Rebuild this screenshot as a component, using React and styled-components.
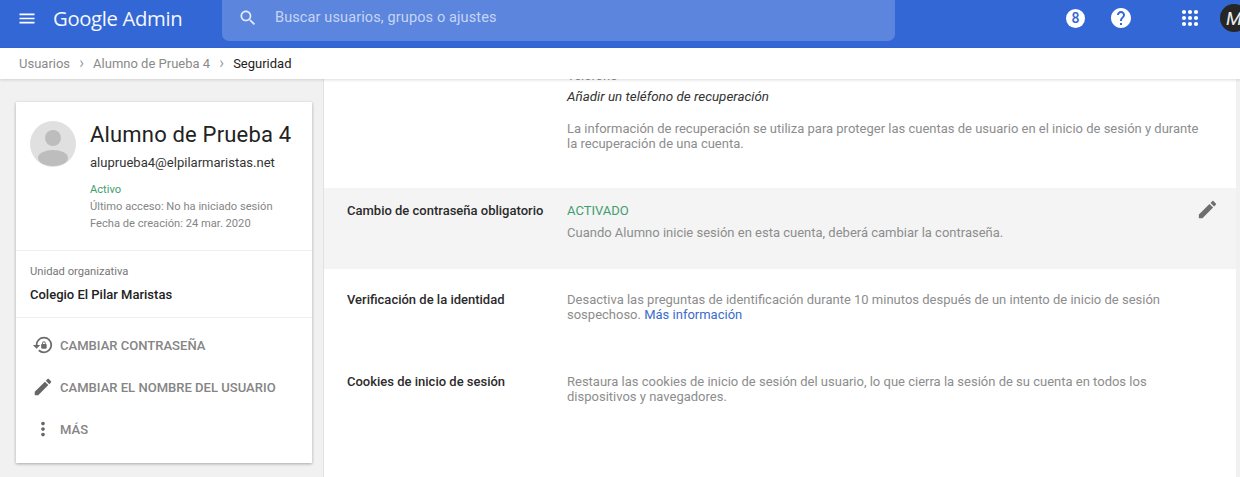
import React from 'react';
import styled, { createGlobalStyle } from 'styled-components';

const Global = createGlobalStyle`
  html, body { margin: 0; padding: 0; height: 100%; overflow: hidden; }
  body { font-family: Roboto, "Liberation Sans", sans-serif; background: #f1f1f1; }
  * { box-sizing: border-box; }
`;
const Page = styled.div`width: 1240px; height: 477px; display: flex; flex-direction: column; overflow: hidden;`;
const TopBar = styled.header`height: 48px; flex: none; background: #3367d6; display: flex; align-items: flex-start; color: #fff; overflow: hidden; padding-left: 17px;`;
const MenuBtn = styled.div`width: 20px; flex: none; height: 36px; display: flex; align-items: center; justify-content: center; margin-right: 16px;`;
const Logo = styled.div`width: 169px; flex: none; height: 36px; line-height: 36px; font-family: "Open Sans", sans-serif; font-size: 20.3px; letter-spacing: -0.35px; opacity: .95;`;
const Search = styled.div`width: 673px; flex: none; height: 41px; background: #5c85de; border-radius: 0 0 7px 7px; display: flex; align-items: flex-start; padding-left: 16px; margin-right: 171px;`;
const SearchIconBox = styled.div`height: 36px; display: flex; align-items: center; margin-right: 17px;`;
const SearchText = styled.div`height: 36px; line-height: 36px; font-size: 14.5px; letter-spacing: .12px; color: #c6d5f4;`;
const HeadIcons = styled.div`height: 36px; flex: none; display: flex; align-items: center;`;
const Badge = styled.div`width: 19px; height: 19px; flex: none; border-radius: 50%; background: #fff; color: #3367d6; font-size: 14px; font-weight: 500; display: flex; align-items: center; justify-content: center; margin-right: 24px;`;
const HelpBox = styled.div`width: 24px; height: 24px; flex: none; margin-right: 45px;`;
const AppsBox = styled.div`width: 24px; height: 24px; flex: none; margin-right: 18px;`;
const Avatar = styled.div`width: 28px; height: 28px; flex: none; border-radius: 50%; background: #262626; color: #eee; font-size: 19px; font-style: italic; font-weight: 400; display: flex; align-items: center; justify-content: flex-start; padding-left: 6px; overflow: hidden;`;
const Crumbs = styled.nav`height: 31px; flex: none; background: #fff; display: flex; align-items: center; padding: 0 0 1px 19px; font-size: 13px; color: #8a8a8a; box-shadow: 0 1px 3px rgba(0,0,0,.14); position: relative; z-index: 2;`;
const Sep = styled.span`width: 23px; text-align: center; font-size: 16px; line-height: 16px; color: #9a9a9a;`;
const Current = styled.span`color: #222;`;
const Main = styled.main`flex: 1; min-height: 0; display: flex;`;
const Side = styled.aside`width: 324px; flex: none; padding: 23px 11px 0 16px; border-right: 1px solid #e2e2e2;`;
const Card = styled.section`background: #fff; height: 361px; box-shadow: 0 1px 3px rgba(0,0,0,.3);`;
const UserHead = styled.div`height: 149px; padding: 19px 0 0 14px; display: flex; border-bottom: 1px solid #f0f0f0;`;
const Photo = styled.div`width: 46px; height: 46px; flex: none; border-radius: 50%; overflow: hidden; margin-right: 14px;`;
const UserInfo = styled.div`min-width: 0;`;
const Name = styled.h1`margin: 0; font-size: 22px; font-weight: 400; line-height: 28px; color: #222; white-space: nowrap; letter-spacing: .18px;`;
const Email = styled.div`font-size: 13.05px; line-height: 18px; margin-top: 5px; color: #333; white-space: nowrap;`;
const Meta = styled.div`font-size: 11.15px; line-height: 17px; color: ${p => p.$green ? '#3f9e70' : '#858585'}; white-space: nowrap; margin-top: ${p => p.$green ? '9px' : '0'};`;
const OrgBlock = styled.div`height: 67px; padding: 14px 0 0 14px; border-bottom: 1px solid #f0f0f0;`;
const OrgLabel = styled.div`font-size: 11.2px; line-height: 14px; color: #777;`;
const OrgName = styled.div`font-size: 13px; line-height: 16px; margin-top: 8px; font-weight: 500; color: #222;`;
const Actions = styled.div`padding-top: 6px;`;
const Action = styled.div`height: 42px; display: flex; align-items: center; padding-left: 15px; font-size: 13.05px; font-weight: 500; color: #858585; white-space: nowrap;`;
const ActionIcon = styled.span`width: 24px; height: 22px; margin-right: 5px; display: flex; align-items: center; justify-content: center;`;
const Content = styled.div`flex: 1; margin-right: 4px; background: #fff; overflow: hidden; font-size: 13px; line-height: 15px; color: #858585;`;
const Scroller = styled.div`margin-top: -11px;`;
const Row = styled.div`display: grid; grid-template-columns: 220px 637px; padding: ${p => p.$pad || '0'} 0 0 23px; height: ${p => p.$h}px; background: ${p => p.$on ? '#f4f4f4' : 'transparent'}; position: relative;`;
const Label = styled.div`font-weight: 500; color: #2b2b2b; white-space: nowrap;`;
const Body = styled.div`min-width: 0;`;
const Muted = styled.div`color: #8d8d8d;`;
const Italic = styled.div`font-style: italic; font-size: 13.4px; color: #333; margin-top: 6px; margin-bottom: 17px;`;
const Status = styled.div`color: #3f9e70; margin-bottom: 7px;`;
const Link = styled.a`color: #3b6cc9; text-decoration: none;`;
const EditCell = styled.div`position: absolute; top: 10px; right: 17px; width: 23px; height: 23px;`;

const P = { m: 'M3 18h18v-2H3v2zm0-5h18v-2H3v2zm0-7v2h18V6H3z',
  s: 'M15.5 14h-.79l-.28-.27C15.41 12.59 16 11.11 16 9.5 16 5.91 13.09 3 9.5 3S3 5.91 3 9.5 5.91 16 9.5 16c1.61 0 3.09-.59 4.23-1.57l.27.28v.79l5 4.99L20.49 19l-4.99-5zm-6 0C7.01 14 5 11.99 5 9.5S7.01 5 9.5 5 14 7.01 14 9.5 11.99 14 9.5 14z',
  h: 'M12 2C6.48 2 2 6.48 2 12s4.48 10 10 10 10-4.48 10-10S17.52 2 12 2zm1 17h-2v-2h2v2zm2.07-7.75l-.9.92C13.45 12.9 13 13.5 13 15h-2v-.5c0-1.1.45-2.1 1.17-2.83l1.24-1.26c.37-.36.59-.86.59-1.41 0-1.1-.9-2-2-2s-2 .9-2 2H8c0-2.21 1.79-4 4-4s4 1.79 4 4c0 .88-.36 1.68-.93 2.25z',
  e: 'M3 17.25V21h3.75L17.81 9.94l-3.75-3.75L3 17.25zM20.71 7.04c.39-.39.39-1.02 0-1.41l-2.34-2.34c-.39-.39-1.02-.39-1.41 0l-1.83 1.83 3.75 3.75 1.83-1.83z',
  v: 'M12 8c1.1 0 2-.9 2-2s-.9-2-2-2-2 .9-2 2 .9 2 2 2zm0 2c-1.1 0-2 .9-2 2s.9 2 2 2 2-.9 2-2-.9-2-2-2zm0 6c-1.1 0-2 .9-2 2s.9 2 2 2 2-.9 2-2-.9-2-2-2z',
  l: 'M13 3a9 9 0 0 0-9 9H1l4 4 4-4H6c0-3.87 3.13-7 7-7s7 3.13 7 7-3.13 7-7 7c-1.9 0-3.6-.77-4.85-2l-1.42 1.42A8.95 8.95 0 0 0 13 21a9 9 0 0 0 0-18zm2 8v-1a2 2 0 1 0-4 0v1c-.55 0-1 .45-1 1v3c0 .55.45 1 1 1h4c.55 0 1-.45 1-1v-3c0-.55-.45-1-1-1zm-1 0h-2v-1a1 1 0 1 1 2 0v1z' };
const Icon = ({ d, size = 24, color = '#fff' }) => (
  <svg width={size} height={size} viewBox="0 0 24 24" fill={color} fillRule="evenodd"><path d={d} /></svg>
);

export default function App() {
  return (
    <Page>
      <Global />
      <TopBar>
        <MenuBtn><Icon d={P.m} size={23} /></MenuBtn>
        <Logo>Google Admin</Logo>
        <Search>
          <SearchIconBox><Icon d={P.s} size={20} color="#e4ebfa" /></SearchIconBox>
          <SearchText>Buscar usuarios, grupos o ajustes</SearchText>
        </Search>
        <HeadIcons>
          <Badge>8</Badge>
          <HelpBox><Icon d={P.h} /></HelpBox>
          <AppsBox>
            <svg width="24" height="24" viewBox="0 0 24 24" fill="#fff">
              {[6, 12, 18].flatMap(y => [6, 12, 18].map(x => <circle key={`${x}-${y}`} cx={x} cy={y} r="2.1" />))}
            </svg>
          </AppsBox>
          <Avatar>M</Avatar>
        </HeadIcons>
      </TopBar>
      <Crumbs>
        Usuarios<Sep>›</Sep>Alumno de Prueba 4<Sep>›</Sep><Current>Seguridad</Current>
      </Crumbs>
      <Main>
        <Side>
          <Card>
            <UserHead>
              <Photo>
                <svg width="46" height="46" viewBox="0 0 46 46">
                  <rect width="46" height="46" fill="#e0e0e0" />
                  <circle cx="23" cy="17" r="8" fill="#bdbdbd" />
                  <ellipse cx="23" cy="37" rx="15" ry="8" fill="#bdbdbd" />
                </svg>
              </Photo>
              <UserInfo>
                <Name>Alumno de Prueba 4</Name>
                <Email>aluprueba4@elpilarmaristas.net</Email>
                <Meta $green>Activo</Meta>
                <Meta>Último acceso: No ha iniciado sesión</Meta>
                <Meta>Fecha de creación: 24 mar. 2020</Meta>
              </UserInfo>
            </UserHead>
            <OrgBlock>
              <OrgLabel>Unidad organizativa</OrgLabel>
              <OrgName>Colegio El Pilar Maristas</OrgName>
            </OrgBlock>
            <Actions>
              <Action><ActionIcon><Icon d={P.l} size={22} color="#6b6b6b" /></ActionIcon>CAMBIAR CONTRASEÑA</Action>
              <Action><ActionIcon><Icon d={P.e} size={22} color="#666" /></ActionIcon>CAMBIAR EL NOMBRE DEL USUARIO</Action>
              <Action><ActionIcon><Icon d={P.v} size={22} color="#666" /></ActionIcon>MÁS</Action>
            </Actions>
          </Card>
        </Side>
        <Content>
          <Scroller>
            <Row $h={120}>
              <div />
              <Body>
                <Muted>Teléfono</Muted>
                <Italic>Añadir un teléfono de recuperación</Italic>
                <Muted>La información de recuperación se utiliza para proteger las cuentas de usuario en el inicio de sesión y durante la recuperación de una cuenta.</Muted>
              </Body>
            </Row>
            <Row $h={81} $on $pad="15px">
              <Label>Cambio de contraseña obligatorio</Label>
              <Body>
                <Status>ACTIVADO</Status>
                <Muted>Cuando Alumno inicie sesión en esta cuenta, deberá cambiar la contraseña.</Muted>
              </Body>
              <EditCell><Icon d={P.e} size={23} color="#6e6e6e" /></EditCell>
            </Row>
            <Row $h={82} $pad="23px">
              <Label>Verificación de la identidad</Label>
              <Muted>Desactiva las preguntas de identificación durante 10 minutos después de un intento de inicio de sesión sospechoso. <Link>Más información</Link></Muted>
            </Row>
            <Row $h={124} $pad="23px">
              <Label>Cookies de inicio de sesión</Label>
              <Muted>Restaura las cookies de inicio de sesión del usuario, lo que cierra la sesión de su cuenta en todos los dispositivos y navegadores.</Muted>
            </Row>
            <Row $h={30}>
              <Label>Acceso de aplicaciones</Label>
            </Row>
          </Scroller>
        </Content>
      </Main>
    </Page>
  );
}
